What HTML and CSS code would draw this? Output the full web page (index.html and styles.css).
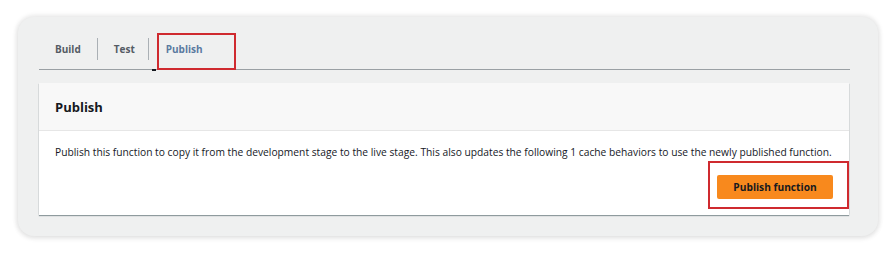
FILE: index.html
```html
<!DOCTYPE html>
<html>
<head>
<meta charset="utf-8">
<link rel="stylesheet" href="styles.css">
</head>
<body>
<div class="card">
  <div class="tabs">
    <div class="tab">Build</div>
    <div class="sep"></div>
    <div class="tab">Test</div>
    <div class="sep"></div>
    <div class="tab active">Publish
      <span class="hl hl-tab"></span>
    </div>
  </div>
  <div class="panel">
    <div class="panel-head">Publish</div>
    <div class="panel-body">
      <p class="desc">Publish this function to copy it from the development stage to the live stage. This also updates the following 1 cache behaviors to use the newly published function.</p>
      <div class="actions">
        <button class="btn">Publish function</button>
        <span class="hl hl-btn"></span>
      </div>
    </div>
  </div>
</div>
</body>
</html>
```
FILE: styles.css
```css
* { box-sizing: border-box; }
html, body { margin: 0; padding: 0; background: #fff; }
body {
  font-family: "Open Sans", "Noto Sans", sans-serif;
  color: #16191f;
  padding: 17px 18px 0 18px;
  width: 895px;
  height: 254px;
}
.card {
  width: 860px;
  height: 219px;
  background: #eff0f0;
  border-radius: 16px;
  box-shadow: 0 0 4px 2px rgba(0,0,0,0.08), 0 2px 6px rgba(0,0,0,0.06);
  padding: 21px 28px 0 21px;
}
.tabs {
  display: flex;
  align-items: flex-start;
  height: 32px;
  border-bottom: 1px solid #9aa0a4;
  padding-left: 16px;
}
.tab {
  font-size: 10px;
  font-weight: 700;
  color: #545b64;
  position: relative;
  height: 22px;
  display: flex;
  align-items: center;
}
.tab.active { color: #5a7aa0; }
.sep {
  width: 1px;
  height: 22px;
  background: #aab0b5;
  margin: 0 16px 0 16px;
}
.sep + .tab.active { margin-left: 1px; }
.tab:nth-child(3) { margin-right: -3px; }
.tab.active::before {
  content: "";
  position: absolute;
  left: -14px;
  bottom: -11px;
  width: 4px;
  height: 2px;
  background: #16191f;
}
.hl {
  position: absolute;
  border: 2px solid #cf2a2f;
}
.hl-tab {
  left: -9px;
  top: -5px;
  width: 79px;
  height: 37px;
}
.panel {
  margin-top: 13px;
  background: #fff;
  box-shadow: 0 1px 1px 0 rgba(0,28,36,0.4), 1px 0 1px -1px rgba(0,28,36,0.2), -1px 0 1px -1px rgba(0,28,36,0.2);
  width: 810px;
}
.panel-head {
  height: 48px;
  background: #f8f8f8;
  border-bottom: 1px solid #e6e6e6;
  padding-left: 16px;
  display: flex;
  align-items: center;
  font-size: 13px;
  font-weight: 700;
}
.panel-body { padding: 12px 16px 16px 16px; }
.desc {
  margin: 0;
  font-size: 10.25px;
  line-height: 18px;
  white-space: nowrap;
}
.actions {
  display: flex;
  justify-content: flex-end;
  margin-top: 14px;
  position: relative;
}
.btn {
  font-family: inherit;
  font-size: 10.2px;
  font-weight: 700;
  color: #16191f;
  background: #f8891d;
  border: none;
  border-radius: 2px;
  width: 116px;
  height: 24px;
  padding: 0;
}
.hl-btn {
  right: -16px;
  top: -14px;
  width: 141px;
  height: 48px;
}
```
